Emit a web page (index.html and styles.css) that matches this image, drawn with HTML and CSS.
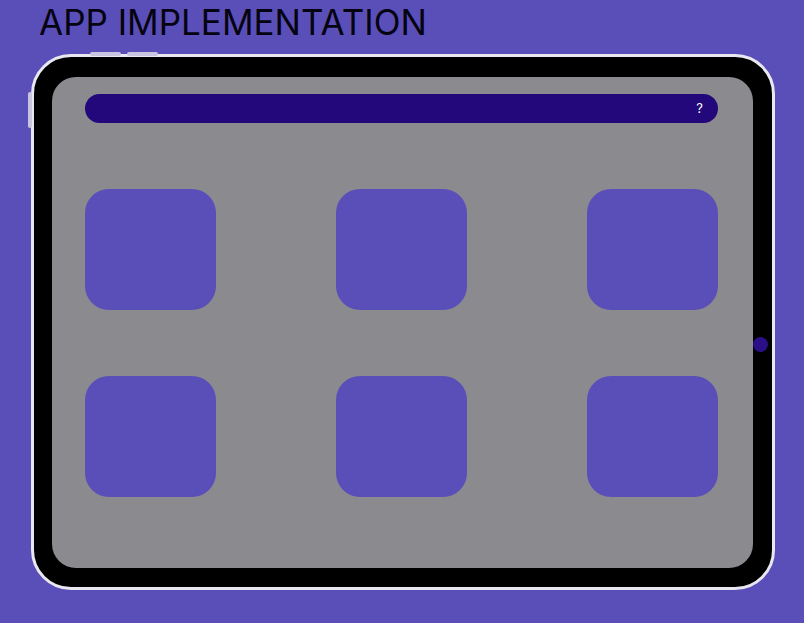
FILE: index.html
```html
<!DOCTYPE html>
<html lang="en">
<head>
  <meta charset="UTF-8" />
  <meta name="viewport" content="width=device-width, initial-scale=1.0"/>
  <title>App Implementation</title>
  <link rel="stylesheet" href="styles.css">
</head>
<body>
  <h1 class="page-title">APP IMPLEMENTATION</h1>

  <div class="tablet">
    <span class="side-btn top-btn top-btn-1"></span>
    <span class="side-btn top-btn top-btn-2"></span>
    <span class="side-btn left-btn"></span>
    <div class="bezel">
      <div class="screen">
        <div class="top-bar">
          <span class="help">?</span>
        </div>
        <div class="app-grid">
          <div class="app-tile"></div>
          <div class="app-tile"></div>
          <div class="app-tile"></div>
          <div class="app-tile"></div>
          <div class="app-tile"></div>
          <div class="app-tile"></div>
        </div>
      </div>
      <span class="camera"></span>
    </div>
  </div>
</body>
</html>
```

FILE: styles.css
```css
* {
  margin: 0;
  padding: 0;
  box-sizing: border-box;
}
body {
  background: #5a4fb8;
  font-family: 'Inter', 'Open Sans', sans-serif;
  height: 623px;
  overflow: hidden;
}
.page-title {
  font-size: 35px;
  font-weight: 400;
  line-height: normal;
  color: #050310;
  margin: 1px 0 0 39px;
}
.tablet {
  position: relative;
  width: 744px;
  height: 536px;
  margin: 11px 0 0 31px;
  border: 3px solid #e9e7f0;
  border-radius: 40px;
  background: #000;
}
.side-btn {
  position: absolute;
  background: #c9c5e0;
  border-radius: 2px;
}
.top-btn {
  top: -5px;
  width: 31px;
  height: 4px;
}
.top-btn-1 { left: 56px; }
.top-btn-2 { left: 93px; }
.left-btn {
  left: -6px;
  top: 35px;
  width: 4px;
  height: 36px;
}
.bezel {
  position: relative;
  height: 100%;
  padding: 20px 19px 19px 18px;
}
.screen {
  height: 100%;
  background: #8b8a8f;
  border-radius: 24px;
  padding: 17px 35px 0 33px;
}
.top-bar {
  height: 29px;
  background: #22087a;
  border-radius: 15px;
  display: flex;
  align-items: center;
  justify-content: flex-end;
  padding-right: 15px;
}
.help {
  color: #fff;
  font-size: 13px;
  line-height: 1;
}
.app-grid {
  display: grid;
  grid-template-columns: 131px 131px 131px;
  justify-content: space-between;
  row-gap: 66px;
  margin-top: 66px;
}
.app-tile {
  height: 121px;
  background: #5a4fb8;
  border-radius: 24px;
}
.camera {
  position: absolute;
  right: 4px;
  top: 280px;
  width: 15px;
  height: 15px;
  border-radius: 50%;
  background: #2a0f86;
}
```
